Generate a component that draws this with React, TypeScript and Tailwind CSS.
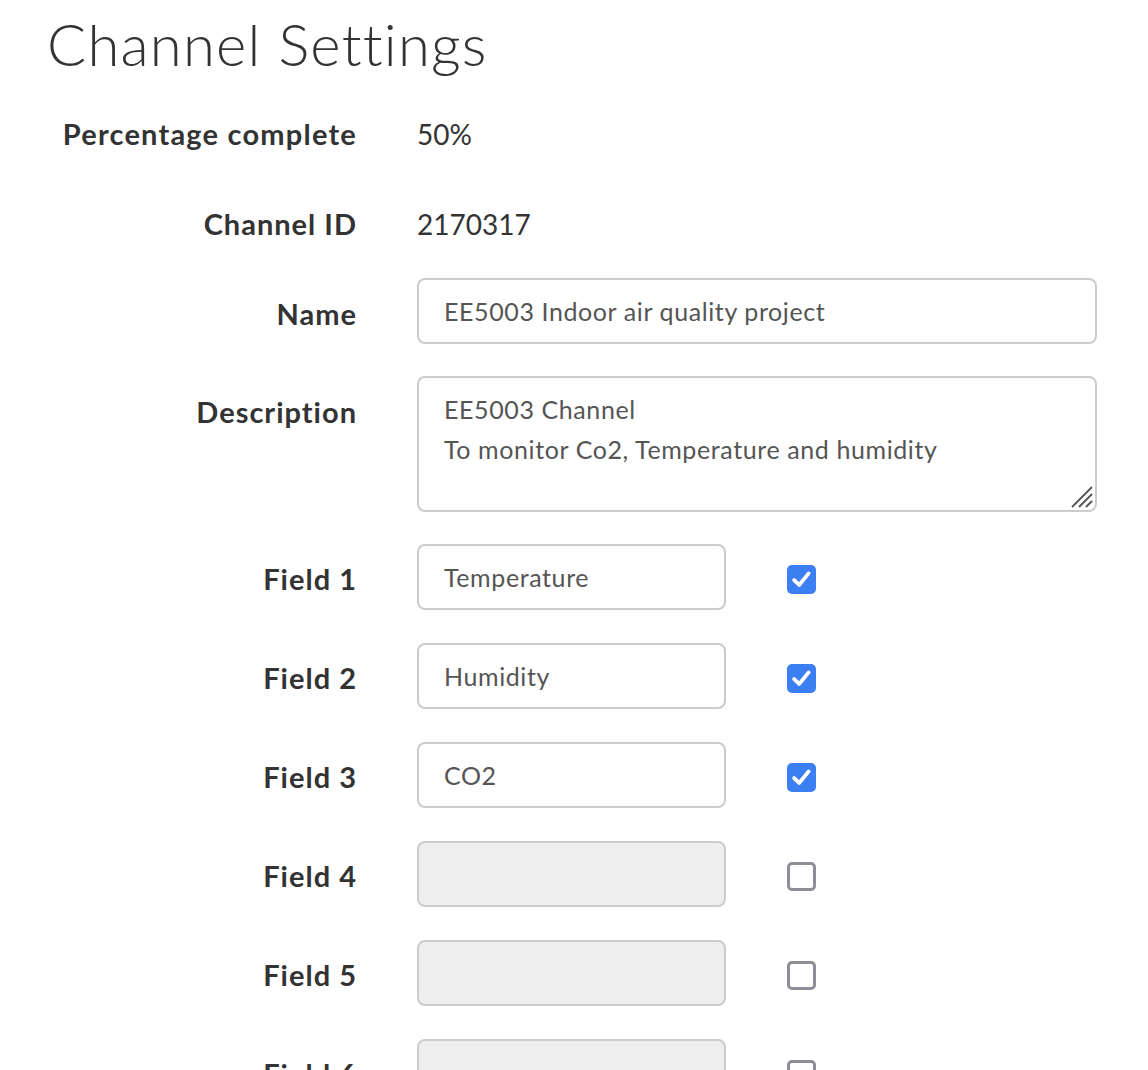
import React from 'react';

const FIELDS = [
    { label: 'Field 1', value: 'Temperature', on: true },
    { label: 'Field 2', value: 'Humidity', on: true },
    { label: 'Field 3', value: 'CO2', on: true },
    { label: 'Field 4', value: '', on: false },
    { label: 'Field 5', value: '', on: false },
    { label: 'Field 6', value: '', on: false },
];

const Check = ({ on }: { on: boolean }) =>
    on ? (
        <span className="flex h-[29px] w-[29px] items-center justify-center rounded-[5px] bg-[#3b7ff2]">
            <svg width="21" height="21" viewBox="0 0 20 20" fill="none">
                <path d="M3 10.5 L7.8 15.2 L16.8 4.2" stroke="white" strokeWidth="3.6" strokeLinecap="round" strokeLinejoin="round" />
            </svg>
        </span>
    ) : (
        <span className="block h-[29px] w-[29px] rounded-[5px] border-[3px] border-[#8e8d98] bg-white" />
    );

export default function App() {
    return (
        <div className="min-h-screen bg-white pl-[47px] text-[#333] font-['Lato',sans-serif]">
            <h1 className="pt-[12px] text-[58px] font-light leading-[64px] text-[#333] tracking-[1.2px]">Channel Settings</h1>

            <div className="mt-[28px] flex flex-col">
                <div className="flex h-[60px] items-center gap-[60px]">
                    <div className="w-[310px] text-right text-[29px] font-bold tracking-[1.2px]">Percentage complete</div>
                    <div className="text-[28px]">50%</div>
                </div>
                <div className="mt-[30px] flex h-[60px] items-center gap-[60px]">
                    <div className="w-[310px] text-right text-[29px] font-bold tracking-[1px]">Channel ID</div>
                    <div className="text-[28px]">2170317</div>
                </div>
                <div className="mt-[24px] flex items-center gap-[60px]">
                    <div className="w-[310px] pt-[6px] text-right text-[29px] font-bold tracking-[1px]">Name</div>
                    <input
                        readOnly
                        value="EE5003 Indoor air quality project"
                        className="h-[66px] w-[680px] rounded-[8px] border-2 border-[#ccc] bg-white px-[25px] text-[25px] tracking-[0.6px] text-[#555] outline-none"
                    />
                </div>
                <div className="mt-[32px] flex items-start gap-[60px]">
                    <div className="w-[310px] pt-[14px] text-right text-[29px] font-bold tracking-[1px]">Description</div>
                    <div className="relative">
                        <textarea
                            readOnly
                            value={'EE5003 Channel\nTo monitor Co2, Temperature and humidity'}
                            className="block h-[136px] w-[680px] resize-none rounded-[8px] border-2 border-[#ccc] bg-white px-[25px] py-[11px] text-[25px] leading-[40px] tracking-[0.6px] text-[#555] outline-none"
                        />
                        <svg className="pointer-events-none absolute bottom-[3px] right-[3px]" width="28" height="28" viewBox="0 0 28 28">
                            <path d="M26 6 L6 26 M26 13 L13 26 M26 20 L20 26" stroke="#555" strokeWidth="1.8" />
                        </svg>
                    </div>
                </div>
                <div className="mt-[32px] flex flex-col gap-[33px]">
                    {FIELDS.map(f => (
                        <div key={f.label} className="flex items-center">
                            <div className="w-[310px] pt-[4px] text-right text-[29px] font-bold tracking-[1px]">{f.label}</div>
                            <input
                                readOnly
                                disabled={!f.on}
                                value={f.value}
                                className={`ml-[60px] h-[66px] w-[309px] rounded-[8px] border-2 border-[#ccc] px-[25px] text-[25px] tracking-[0.6px] text-[#555] outline-none ${f.on ? 'bg-white' : 'bg-[#eee]'}`}
                            />
                            <div className="ml-[61px] mt-[4px]">
                                <Check on={f.on} />
                            </div>
                        </div>
                    ))}
                </div>
            </div>
        </div>
    );
}
